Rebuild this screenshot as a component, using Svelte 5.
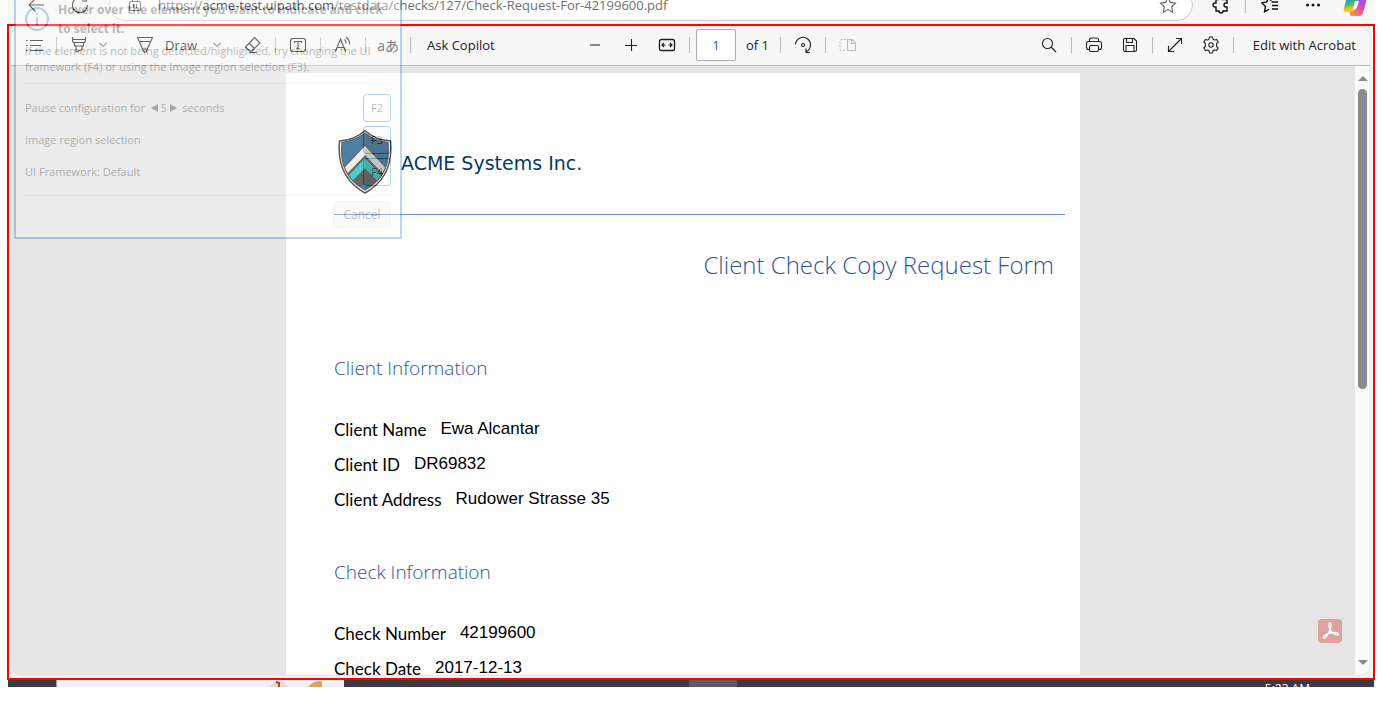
<script lang="ts">
  const clientRows = [
    ['Client Name', 'Ewa Alcantar'],
    ['Client ID', 'DR69832'],
    ['Client Address', 'Rudower Strasse 35'],
  ];
  const checkRows = [
    ['Check Number', '42199600'],
    ['Check Date', '2017-12-13'],
  ];
  let page = $state('1');
</script>

{#snippet chevron()}
  <svg class="soft" width="8" height="6" viewBox="0 0 8 6"><path d="M.5 1 4 4.500 7.500 1" /></svg>
{/snippet}

{#snippet section(title: string, rows: string[][])}
  <section>
    <h2>{title}</h2>
    <dl>
      {#each rows as [label, value]}
        <div class="row"><dt>{label}</dt><dd>{value}</dd></div>
      {/each}
    </dl>
  </section>
{/snippet}

<div class="screen">
  <header class="address">
    <div class="nav">
      <button aria-label="Back"><svg width="18" height="18" viewBox="0 0 18 18"><path d="M17 9H2M8.500 2.500 2 9l6.500 6.500" /></svg></button>
      <button aria-label="Refresh"><svg width="18" height="18" viewBox="0 0 18 18"><path d="M16.500 9A7.500 7.500 0 1 1 14 3.500M15.500 0v5H11" /></svg></button>
    </div>
    <div class="pill">
      <svg class="lock" width="14" height="16" viewBox="0 0 14 16"><rect x="1.500" y="4.500" width="11" height="9" rx="1" /><path d="M4.500 4.500V2a2.500 2.500 0 0 1 5 0v2.500M5.500 7v4M8.500 7v4" /></svg>
      <span class="url">https://<b>acme-test.uipath.com</b>/testdata/checks/127/Check-Request-For-42199600.pdf</span>
      <button class="star" aria-label="Add to favorites"><svg width="18" height="18" viewBox="0 0 18 18"><path d="m9 1.500 2.300 4.900 5.200.7-3.800 3.700.9 5.400L9 13.600l-4.600 2.600.9-5.400L1.500 7.100l5.200-.7z" /></svg></button>
    </div>
    <div class="tools">
      <button aria-label="Extensions"><svg class="bold" width="18" height="18" viewBox="0 0 18 18"><path d="M4 3.500h2.500a2 2 0 1 1 4 0H15V7h-1a2 2 0 0 0 0 4h1v4h-4a2 2 0 0 1-4 0H4v-4H3a2 2 0 0 1 0-4h1z" /></svg></button>
      <i class="sep"></i>
      <button aria-label="Favorites"><svg class="bold" width="18" height="18" viewBox="0 0 18 18"><path d="M10 5 8 1 5.800 5.900.8 6.800l3.700 3.600-.9 5.400L8 13.400M10.500 6H17M11 9.500h6M11 13h6" /></svg></button>
      <button aria-label="Settings and more"><svg class="dots" width="18" height="18" viewBox="0 0 18 18"><circle cx="3.500" cy="9" r="1.500" /><circle cx="9" cy="9" r="1.500" /><circle cx="14.500" cy="9" r="1.500" /></svg></button>
      <button aria-label="Copilot">
        <svg class="copilot" width="24" height="24" viewBox="0 0 24 24">
          <defs>
            <linearGradient id="cpA" x1="0" y1="0" x2="0.200" y2="1"><stop offset="0.300" stop-color="#159fd8" /><stop offset="0.600" stop-color="#55b957" /><stop offset="0.850" stop-color="#f3c520" /></linearGradient>
            <linearGradient id="cpB" x1="1" y1="0" x2="0.300" y2="1"><stop offset="0.300" stop-color="#a94cf0" /><stop offset="0.650" stop-color="#ee5b96" /><stop offset="1" stop-color="#ff8b42" /></linearGradient>
          </defs>
          <path fill="url(#cpA)" d="M6 2h11l-5 15q-1 2-3 2H4q-4 0-3-4L4 4q1-2 2-2z" />
          <path fill="url(#cpB)" d="M14 5h6q4 0 3 4l-3 11q-1 3-4 3H9q-3 0-2-4 4 0 5-3l2-8q1-2 0-3z" />
          <path fill="#fff" d="M12 8h4l-2 6q-1 3-4 3z" />
        </svg>
      </button>
    </div>
  </header>

  <main class="frame">
    <div class="viewer">
      <div class="toolbar">
        <button aria-label="Contents"><svg width="18" height="14" viewBox="0 0 18 14"><path d="M5 2.500h13M5 7.500h11M5 12.500h13M1 2.500h1.500M1 7.500h1.500M1 12.500h1.500" /></svg></button>
        <i class="sep"></i>
        <button aria-label="Highlight"><svg width="16" height="18" viewBox="0 0 16 18"><path d="M1.500 1v3.500a2 2 0 0 0 2 2h9a2 2 0 0 0 2-2V1M1.500 3.500h13M3.500 6.500v3.500h9V6.500M5 10v6l6-2.500V10" /></svg></button>
        <button class="narrow" aria-label="Highlight colors">{@render chevron()}</button>
        <button class="draw"><svg width="32" height="18" viewBox="-8 0 32 18"><path d="M.5 1.500h15L9 16H7zM3 5.500h10M6 13h4" /></svg>Draw</button>
        <button class="narrow after-draw" aria-label="Draw options">{@render chevron()}</button>
        <button aria-label="Erase"><svg width="18" height="18" viewBox="0 0 18 18"><path d="m10.500 1.500 5.500 5.500-8 8H5.500l-4-4zM5 7l5.500 5.500M5.500 16.500h7" /></svg></button>
        <i class="sep"></i>
        <button aria-label="Add text"><svg width="18" height="16" viewBox="0 0 18 16"><rect x="1.500" y="1.500" width="15" height="13" rx="2.500" /><path d="M5.500 6V4.500h7V6M9 4.500v7M7.500 11.500h3" /></svg></button>
        <i class="sep"></i>
        <button aria-label="Read aloud"><svg width="18" height="18" viewBox="0 0 18 18"><path d="M1.500 15.500 6.500 3l5 12.500M3 11.500h7M10.500 3.500q2 1.500 1.500 4M12 1q4 3 3.500 7.500" /></svg></button>
        <i class="sep"></i>
        <button class="glyph" aria-label="Translate">aあ</button>
        <i class="sep"></i>
        <button class="text">Ask Copilot</button>
        <span class="space"></span>
        <button aria-label="Zoom out"><svg width="12" height="12" viewBox="0 0 12 12"><path class="mute" d="M1 6h10" /></svg></button>
        <button class="next" aria-label="Zoom in"><svg width="12" height="12" viewBox="0 0 12 12"><path d="M0 6.500h12M6.500 0v12" /></svg></button>
        <button class="next" aria-label="Fit to width"><svg width="18" height="14" viewBox="0 0 18 14"><rect x="1.500" y="1.500" width="15" height="11" rx="2" stroke-width="1.400" /><path d="M4 7h3.500M10.500 7H14M6 5 4 7l2 2M12 5l2 2-2 2" stroke-width="1.200" /></svg></button>
        <i class="sep"></i>
        <input aria-label="Page number" bind:value={page} />
        <span class="count">of 1</span>
        <i class="sep"></i>
        <button aria-label="Rotate"><svg width="18" height="18" viewBox="0 0 18 18"><path d="M1.500 8.500a7.500 7.500 0 1 1 11 7M16 16.500h-4v-4" /><circle cx="9" cy="9" r="1.500" /></svg></button>
        <i class="sep"></i>
        <button disabled aria-label="Page view"><svg width="18" height="14" viewBox="0 0 18 14"><path d="M8.500 1.500H13l3.500 3.500v7.500h-8zM12.500 1.500v4h4" /><path stroke-dasharray="2 1.500" d="M7 1.500H3a2 2 0 0 0-2 2v7a2 2 0 0 0 2 2h4" /></svg></button>
        <span class="space wide"></span>
        <button aria-label="Find"><svg width="16" height="16" viewBox="0 0 16 16"><circle cx="6.500" cy="6.500" r="5" /><path d="m10 10 5 5" /></svg></button>
        <i class="sep"></i>
        <button aria-label="Print"><svg width="18" height="16" viewBox="0 0 18 16"><path d="M4.500 12.500h-1a2 2 0 0 1-2-2v-4a2 2 0 0 1 2-2h11a2 2 0 0 1 2 2v4a2 2 0 0 1-2 2h-1M4.500 4.500V3a2 2 0 0 1 2-2h5a2 2 0 0 1 2 2v1.500" /><rect x="4.500" y="8.500" width="9" height="6" rx="1.500" /></svg></button>
        <button class="next" aria-label="Save"><svg width="16" height="16" viewBox="0 0 16 16"><path d="M1.500 3a1.500 1.500 0 0 1 1.500-1.500h9l2.500 2.500v9a1.500 1.500 0 0 1-1.500 1.500H3A1.500 1.500 0 0 1 1.500 13zM4.500 1.500v4h6v-4M4 14.500v-6h8v6" /></svg></button>
        <i class="sep"></i>
        <button aria-label="Full screen"><svg width="16" height="16" viewBox="0 0 16 16"><path d="m1.500 14.500 13-13M9 1.500h5.500V7M1.500 9v5.500H7" /></svg></button>
        <button class="next" aria-label="PDF settings"><svg width="18" height="18" viewBox="0 0 18 18"><path d="m7 3.200.5-2.200h3l.5 2.200 1.500.9 2.200-.7 1.500 2.600L14.600 7.600v2.800l1.600 1.600-1.500 2.600-2.200-.7-1.500.9-.5 2.200h-3L7 14.800l-1.500-.9-2.200.7L1.800 12l1.600-1.600V7.600L1.800 6l1.500-2.600 2.200.7z" stroke-linejoin="round" /><circle cx="9" cy="9" r="2.200" /></svg></button>
        <i class="sep"></i>
        <button class="text edit">Edit with Acrobat</button>
      </div>

      <div class="body">
        <div class="canvas">
          <article class="page">
            <div class="brand">
              <svg width="56" height="66" viewBox="0 0 56 66">
                <defs><clipPath id="shield"><path d="M28 4Q38 12 51 13.500 55 46 28 61 1 46 5 13.500 18 12 28 4z" /></clipPath></defs>
                <path d="M28 1.500Q38 11 53.500 12 57 48 28 64 -1 48 2.500 12 18 11 28 1.500z" fill="#ececec" stroke="#111" stroke-width="1.500" />
                <g clip-path="url(#shield)">
                  <path fill="#004a7c" d="M0 0h56v66H0z" />
                  <path fill="#e8e8de" d="M28 16 56 46v10L28 27 0 56V46z" />
                  <path fill="#00b8b5" d="M28 28 56 58v10L28 40 0 68V58z" />
                  <path fill="#252525" d="M28 41 50 62v10L28 53 6 72V62z" />
                  <path fill="#000" opacity=".25" d="M28 0h28v66H28z" />
                </g>
                <path d="M28 4Q38 12 51 13.500 55 46 28 61 1 46 5 13.500 18 12 28 4z" fill="none" stroke="#222" />
              </svg>
              <span>ACME Systems Inc.</span>
            </div>
            <h1>Client Check Copy Request Form</h1>
            {@render section('Client Information', clientRows)}
            {@render section('Check Information', checkRows)}
          </article>
          <button class="acrobat" aria-label="Open in Acrobat"><svg width="24" height="24" viewBox="0 0 24 24"><path d="M12 4c-2 0-1 4 .5 7s5 5 7 5 1-2.500-2-2.500c-4 0-8 1-11 3-2 1.500-1.500 3.500 0 2.500 3-2 5.500-8 6.500-12 .3-2-.2-3-1-3z" /></svg></button>
        </div>
        <div class="scroll"><i class="up"></i><i class="thumb"></i><i class="down"></i></div>
      </div>
    </div>
  </main>

  <footer class="taskbar">
    <div class="search"><svg width="80" height="7" viewBox="0 0 80 7"><circle cx="28" cy="11" r="10" fill="#ddd" /><path d="m25 2 3 1v4" stroke="#c43b1e" stroke-width="2" fill="none" /><path d="M57 7q5-6 12-6 2 0 2 2v4z" fill="#d6a35c" /></svg></div>
    <div class="active"></div>
    <time>5:23 AM</time>
  </footer>

  <aside class="picker">
    <div class="lead">
      <svg width="24" height="24" viewBox="0 0 24 24"><circle cx="12" cy="12" r="11" /><path d="M12 10v8M12 6v2" /></svg>
      <strong>Hover over the element you want to indicate and click<br />to select it.</strong>
    </div>
    <p>If the element is not being detected/highlighted, try changing the UI<br />framework (F4) or using the Image region selection (F3).</p>
    <hr />
    <div class="option"><span>Pause configuration for &nbsp;<i class="tri left"></i> 5 <i class="tri right"></i>&nbsp; seconds</span><button>F2</button></div>
    <div class="option"><span>Image region selection</span><button>F3</button></div>
    <div class="option"><span>UI Framework: Default</span><button>F4</button></div>
    <hr />
    <button class="cancel">Cancel</button>
  </aside>
</div>

<style>
  :global(body) { margin: 0; background: #fff; }
  * { box-sizing: border-box; }
  button { border: 0; padding: 0; background: none; font: inherit; color: inherit; }
  svg { display: block; fill: none; stroke: #222; stroke-width: 1.1; flex: none; }

  .screen {
    position: relative;
    display: flex;
    flex-direction: column;
    height: calc(100vh - 17px);
    margin: 0 7px;
    overflow: hidden;
    font: 13px/18px "Open Sans", "Noto Sans", sans-serif;
    color: #222;
  }

  .address {
    display: flex;
    align-items: flex-end;
    height: 24px;
    flex: none;
    margin: 0 1px;
    padding-bottom: 3px;
    background: #f7f7f7;
  }
  .nav { display: flex; align-items: center; height: 32px; gap: 26px; padding: 0 20px 0 19px; }
  .pill {
    flex: 1;
    display: flex;
    align-items: center;
    height: 32px;
    padding: 0 15px 0 18px;
    background: #fff;
    border: 1px solid #ccc;
    border-radius: 16px;
  }
  .pill svg { stroke: #666; }
  .url { margin-left: 16px; color: #707070; white-space: nowrap; }
  .url b { font-weight: 400; color: #111; }
  .star { margin-left: auto; }
  .tools { display: flex; align-items: center; height: 32px; gap: 15px; padding: 0 7px 0 19px; }
  .tools .sep { margin: 0; }
  .tools button:nth-of-type(n + 3) { margin-left: 10px; }
  .tools button:last-of-type { margin-left: 6px; }
  .bold { stroke: #111; stroke-width: 1.4; }
  .dots { fill: #111; stroke: none; }
  .copilot, .acrobat svg { stroke: none; }

  .frame {
    flex: 1;
    min-height: 0;
    display: flex;
    padding: 1px 3px 3px 2px;
    border: 2px solid #f00;
    background: #f7f7f7;
  }
  .viewer {
    flex: 1;
    min-width: 0;
    display: flex;
    flex-direction: column;
    border-radius: 10px;
    overflow: hidden;
    box-shadow: 0 0 2px #bbb;
    background: #f7f7f7;
  }
  .toolbar {
    display: flex;
    align-items: center;
    height: 39px;
    flex: none;
    padding: 0 14px 2px 7px;
    border-bottom: 1px solid #bbb;
    white-space: nowrap;
  }
  .toolbar button { display: flex; align-items: center; justify-content: center; width: 32px; height: 32px; flex: none; }
  .toolbar .narrow { width: 16px; }
  .toolbar .draw { width: auto; gap: 4px; margin-left: 18px; }
  .toolbar .after-draw { margin: 0 12px; }
  .toolbar .next { margin-left: 4px; }
  .toolbar .text { width: auto; margin-left: 10px; }
  .toolbar .edit { margin-left: 13px; }
  .toolbar button:disabled svg { stroke: #bbb; }
  .toolbar .glyph { font: 14px "Open Sans", "Noto Sans CJK JP", sans-serif; color: #444; }
  .soft { stroke: #777; }
  .mute { stroke: #888; stroke-width: 2; }
  .sep { width: 1px; height: 16px; margin: 0 6px; background: #bbb; flex: none; }
  .space { flex: 1; }
  .wide { flex: 2; }
  input {
    width: 40px;
    height: 32px;
    padding: 0;
    border: 1px solid #aaa;
    border-radius: 2px;
    background: #fff;
    font: inherit;
    text-align: center;
    color: #1a5fa8;
  }
  .count { margin: 0 5px 0 10px; }

  .body { flex: 1; min-height: 0; display: flex; background: #e5e5e5; }
  .canvas { position: relative; flex: 1; display: flex; justify-content: center; overflow: hidden; padding-top: 7px; }
  .page { width: 794px; height: max-content; min-height: 100%; padding: 56px 15px 48px 48px; background: #fff; }
  .brand {
    display: flex;
    align-items: flex-start;
    gap: 8px;
    height: 86px;
    padding-left: 3px;
    border-bottom: 1px solid #6c8fd0;
    font: 19px/24px "DejaVu Sans", Verdana, sans-serif;
    color: #063a66;
  }
  .brand span { padding-top: 22px; }
  h1, h2 { margin: 0; font-family: "Open Sans", sans-serif; font-weight: 300; color: #2f5496; }
  h1 { padding: 32px 11px 67px 0; font-size: 24px; line-height: 36px; text-align: right; }
  h2 { font-size: 19px; line-height: 36px; }
  section { margin-bottom: 37px; }
  dl { margin: 26px 0 0; }
  .row { display: flex; align-items: center; gap: 14px; height: 35px; }
  dt { font: 17px/24px Lato, Carlito, sans-serif; color: #000; }
  dd { margin: 0; padding-bottom: 2px; font: 17px/22px "Liberation Sans", Arial, sans-serif; color: #000; }

  .acrobat { position: absolute; right: 13px; bottom: 32px; width: 24px; height: 24px; border-radius: 4px; background: #dba3a1; }
  .acrobat svg { stroke: #fff; stroke-width: 1.3; }
  .scroll { display: flex; flex-direction: column; align-items: center; width: 15px; padding: 10px 0; background: #fbfbfb; }
  .up, .down { border: 5px solid transparent; }
  .up { border-top: 0; border-bottom-color: #8a8a8a; }
  .down { border-bottom: 0; border-top-color: #8a8a8a; margin-top: auto; }
  .thumb { width: 9px; height: 51%; margin-top: 8px; border-radius: 5px; background: #8b8b8b; }

  .taskbar { display: flex; height: 7px; flex: none; margin: 0 1px; overflow: hidden; background: #3b3b3d; color: #fff; }
  .search { width: 288px; margin-left: 48px; padding-left: 194px; background: #f1f1f1; border-left: 1px solid #999; }
  .search svg { stroke: none; }
  .active { width: 48px; margin-left: 345px; background: #5c5c5e; }
  time { margin: 3px 64px 0 auto; font-size: 12px; line-height: 12px; }

  .picker {
    position: absolute;
    left: 7px;
    top: -11px;
    width: 388px;
    padding: 9px;
    border: 2px solid #2672c9;
    background: #fff;
    opacity: 0.3;
    font-size: 11px;
    line-height: 16px;
    color: #222;
  }
  .lead { display: flex; align-items: center; gap: 9px; height: 38px; font-size: 12px; line-height: 19px; white-space: nowrap; }
  .lead svg { stroke: #1976d2; stroke-width: 2; }
  .picker p { margin: 5px 0 8px; white-space: nowrap; }
  hr { margin: 0 0 10px; border: 0; border-top: 1px solid #ddd; }
  .option { display: flex; align-items: center; justify-content: space-between; height: 28px; margin-bottom: 4px; }
  .option button { width: 28px; height: 28px; border: 1px solid #0078d7; border-radius: 4px; }
  .option + hr { margin: 9px 0 5px; }
  .tri { display: inline-block; border: 4px solid transparent; }
  .left { border-left: 0; border-right: 7px solid #222; }
  .right { border-right: 0; border-left: 7px solid #222; }
  .cancel { display: block; width: 58px; height: 27px; margin-left: auto; border: 1px solid #e2e2e2; border-radius: 4px; background: #f0f0f0; font-size: 12px; }
</style>
